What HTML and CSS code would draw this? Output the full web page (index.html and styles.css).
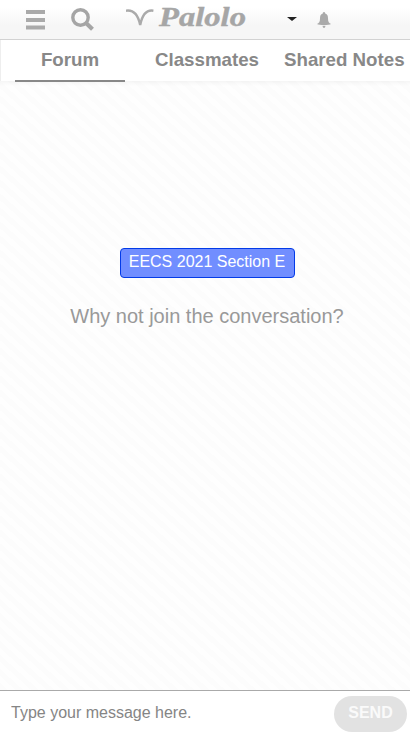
FILE: index.html
```html
<!DOCTYPE html>
<html lang="en">
<head>
<meta charset="utf-8">
<meta name="viewport" content="width=device-width">
<title>Palolo</title>
<link rel="stylesheet" href="styles.css">
</head>
<body>
<header class="topbar">
  <svg class="menu" width="20" height="20" viewBox="0 0 20 20"><path d="M0 0h19v4H0zM0 8h19v4H0zM0 15.5h19v4H0z"/></svg>
  <svg class="search" width="24" height="24" viewBox="0 0 24 24"><circle cx="9.5" cy="9.5" r="7.7"/><path d="M15 15l6.5 6.3"/></svg>
  <svg class="logo" width="122" height="32" viewBox="0 0 122 32"><path d="M0 10.7C8 9.5 12.3 16 14.2 25C16 16 20 9.5 27.4 10.7"/><text x="33" y="25.8" textLength="87" lengthAdjust="spacingAndGlyphs">Palolo</text></svg>
  <span class="caret"></span>
  <svg class="bell" width="14" height="16" viewBox="0 0 14 16"><path d="M7 0C8 0 8.2.8 8.2 1.4C10.5 2 11 4 11 6.5C11 10 12 11.2 14 12C12 13.5 2 13.5 0 12C2 11.2 3 10 3 6.5C3 4 3.5 2 5.8 1.4C5.8.8 6 0 7 0zM5.5 14h3Q8.2 16 7 16T5.5 14z"/></svg>
</header>
<nav class="tabs">
  <a class="tab active">Forum</a>
  <a class="tab classmates">Classmates</a>
  <a class="tab notes">Shared Notes</a>
</nav>
<main class="conversation">
  <span class="course">EECS 2021 Section E</span>
  <p class="prompt">Why not join the conversation?</p>
</main>
<form class="composer">
  <input class="message" placeholder="Type your message here." aria-label="Message">
  <button class="send" type="button">SEND</button>
</form>
</body>
</html>
```
FILE: styles.css
```css
* { box-sizing: border-box; }
body {
  margin: 0;
  height: 735px;
  overflow: hidden;
  display: flex;
  flex-direction: column;
  font-family: "Liberation Sans", Arial, sans-serif;
  background: #fff;
}
.topbar {
  height: 40px;
  flex: none;
  display: flex;
  align-items: flex-start;
  padding-left: 26px;
  border-bottom: 1px solid #d2d2d2;
  background: linear-gradient(#fff 20%, #f6f6f6 65%, #f6f6f6);
}
.topbar svg { flex: none; fill: #aaa; }
.topbar .menu { margin-top: 10px; }
.topbar .search { margin: 8px 0 0 25px; fill: none; stroke: #a5a5a5; stroke-width: 3.4; }
.search path { stroke-width: 4.2; }
.logo { margin-left: 31px; }
.logo path { fill: none; stroke: #aaa; stroke-width: 2.4; }
.logo text {
  font: italic bold 27px "Liberation Serif", serif;
  fill: #a6a6a6;
  stroke: #a6a6a6;
  stroke-width: .4;
}
.caret {
  margin: 17px 0 0 39px;
  border: 5px solid transparent;
  border-top: 4px solid #222;
  border-bottom: 0;
}
.bell { margin: 12px 0 0 20px; }
.tabs {
  height: 41px;
  flex: none;
  display: flex;
  padding-left: 14px;
  border-left: 1px solid #eee;
  background: #fff;
  position: relative;
}
.tab {
  height: 42px;
  font-size: 18.72px;
  font-weight: bold;
  line-height: 40px;
  color: #888;
  white-space: nowrap;
}
.active { width: 110px; text-align: center; border-bottom: 2px solid #888; }
.classmates { width: 104px; margin-left: 30px; }
.notes { margin-left: 25px; }
.conversation {
  flex: 1;
  display: flex;
  flex-direction: column;
  align-items: center;
  padding-top: 167px;
  background:
    linear-gradient(rgba(0, 0, 0, .035), transparent) 0 0 / 100% 5px no-repeat,
    repeating-linear-gradient(42deg, #fcfcfc 0 5.2px, #fefefe 5.2px 10.4px);
}
.course {
  width: 175px;
  height: 30px;
  margin-left: 4px;
  border: 1px solid #033be8;
  border-radius: 4px;
  background: #718eff;
  color: #fff;
  font-size: 16px;
  line-height: 26px;
  text-align: center;
}
.prompt {
  margin: 26px 0 0 4px;
  font-size: 20px;
  line-height: 24px;
  color: #999;
}
.composer {
  height: 45px;
  flex: none;
  display: flex;
  align-items: flex-start;
  border-top: 1px solid #aaa;
  background: #fff;
}
.message {
  width: 334px;
  height: 42px;
  border: 0;
  padding: 1px 11px 0;
  outline: 0;
  font: 16px "Liberation Sans", Arial, sans-serif;
}
.message::placeholder { color: #858585; }
.send {
  width: 73px;
  height: 36px;
  margin-top: 5px;
  padding: 0 0 2px;
  border: 0;
  border-radius: 18px;
  background: #e2e2e2;
  color: #fafafa;
  font: bold 16px "Liberation Sans", Arial, sans-serif;
}
```
